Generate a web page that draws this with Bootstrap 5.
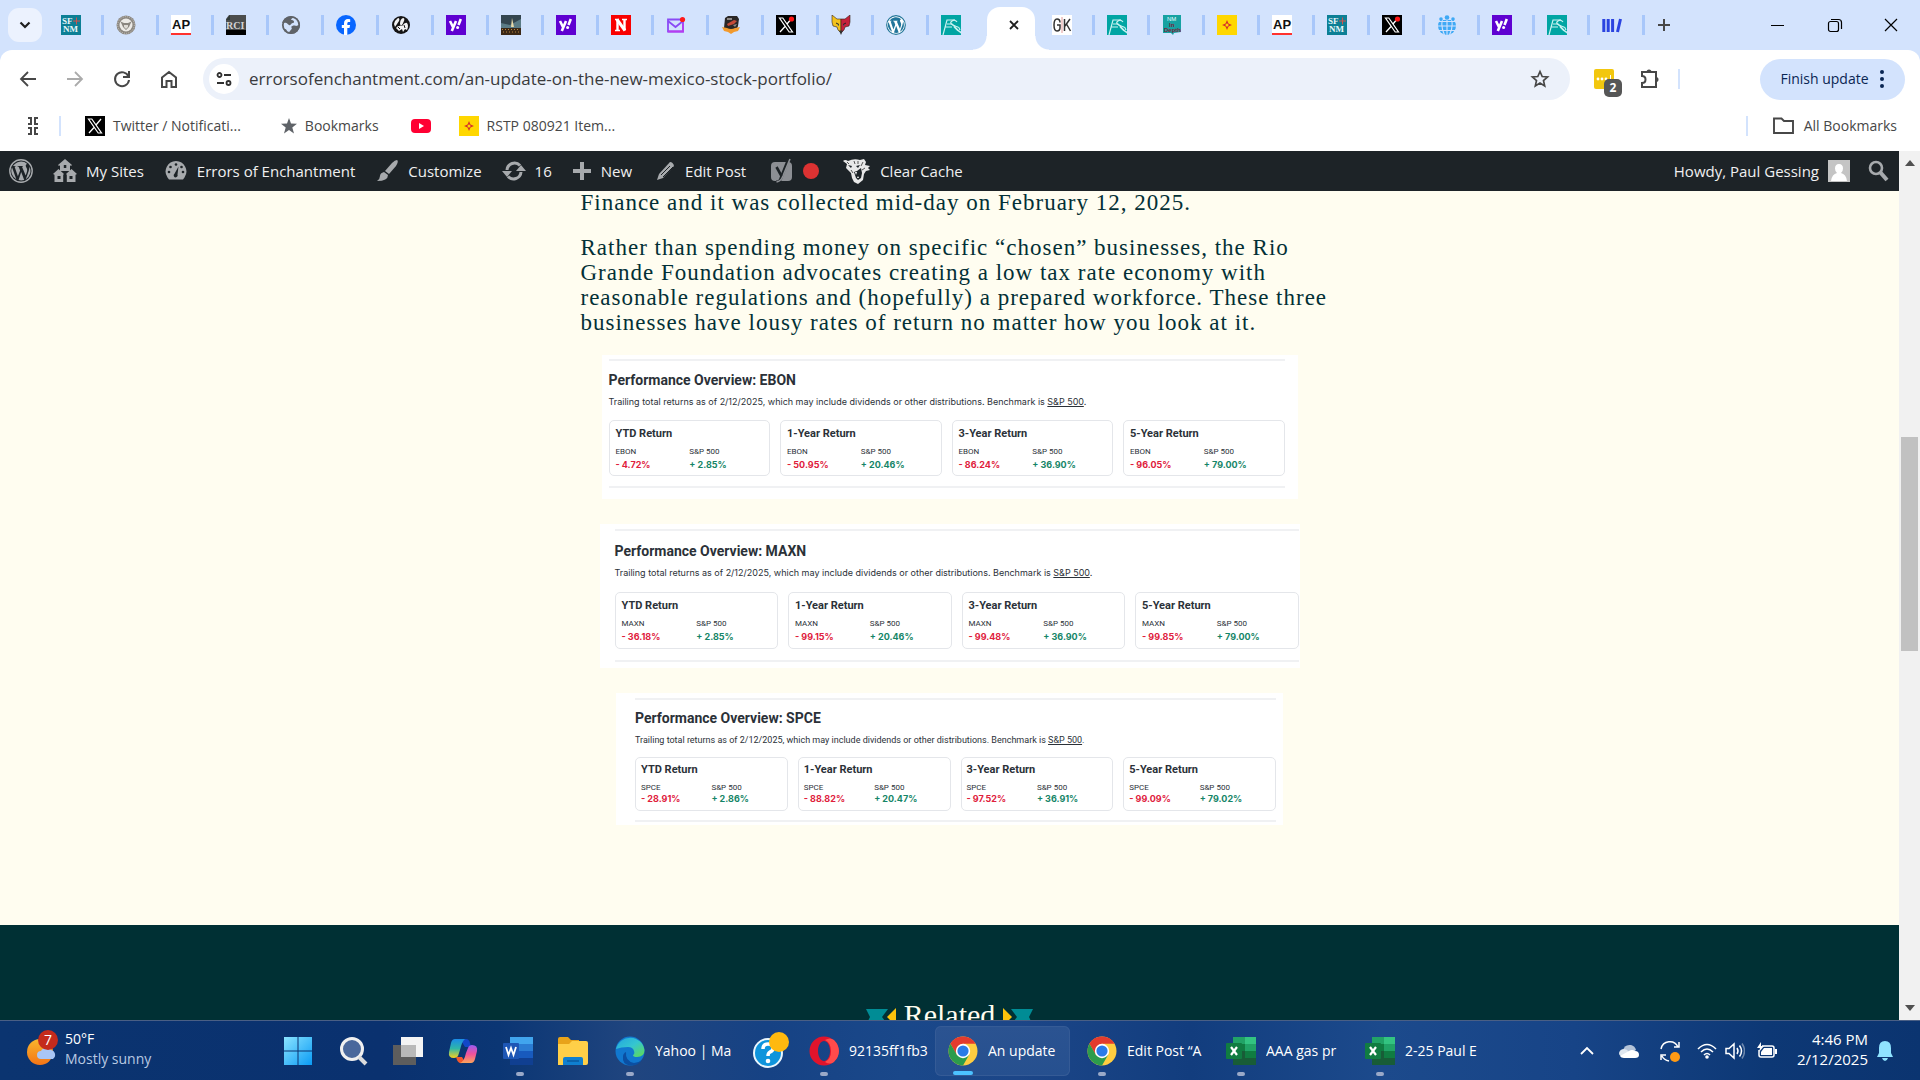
<!DOCTYPE html>
<html lang="en">
<head>
<meta charset="utf-8">
<meta name="viewport" content="width=device-width, initial-scale=1">
<title>An update on the New Mexico stock portfolio</title>
<link rel="stylesheet" href="https://cdn.jsdelivr.net/npm/bootstrap@5.3.0/dist/css/bootstrap.min.css">
<style>
  body { font-family: "Open Sans", "Noto Sans", sans-serif; font-size: 14px; line-height: 20px; color: #1f1f1f; background: #fffdf0; }
  a { text-decoration: none; color: inherit; }
  button, input { font: inherit; color: inherit; }
  .plainbtn { background: none; border: 0; padding: 0; display: inline-flex; align-items: center; justify-content: center; flex: none; }
  svg { display: block; flex: none; }
  .i16 { width: 16px; height: 16px; } .i20 { width: 20px; height: 20px; } .i24 { width: 24px; height: 24px; } .i30 { width: 30px; height: 30px; }

  /* browser chrome */
  .tabstrip { background: #d3e3fd; height: 50px; }
  .tabmenu { width: 34px; height: 34px; border-radius: 11px; background: #ecf2fe; margin: 0 7px 0 8px; }
  .tabcell { width: 55px; height: 20px; padding-left: 12px; border-right: 3px solid #a8c7fa; flex: 0 1 55px; }
  .tabcell.noline { border-color: transparent; }
  .tablive { width: 48px; height: 43px; margin: 7px 5px 0 3px; padding: 0 0 7px 5px; background: #fff; border-radius: 13px 13px 0 0; position: relative; }
  .tablive::before, .tablive::after { content: ""; position: absolute; bottom: 0; width: 14px; height: 14px; }
  .tablive::before { left: -14px; background: radial-gradient(circle at 0 0, transparent 13px, #fff 14px); }
  .tablive::after { right: -14px; background: radial-gradient(circle at 100% 0, transparent 13px, #fff 14px); }
  .winbtn { width: 57px; height: 50px; }
  .toolwrap { background: #d3e3fd; }
  .toolrow { background: #fff; height: 58px; border-radius: 12px 12px 0 0; color: #474747; padding: 0 15px 0 4px; }
  .navbtn { width: 47px; height: 40px; }
  .omnibox { height: 42px; border-radius: 21px; background: #ecf1fa; margin-left: 11px; padding: 0 20px 0 6px; }
  .sitechip { width: 30px; height: 30px; border-radius: 50%; background: #fff; }
  .omnibox input { border: 0; background: transparent; outline: 0; font-size: 17px; line-height: 24px; padding: 0 0 0 10px; color: #3a3b3d; }
  .extbadge { position: absolute; left: 10px; top: 10px; width: 18px; height: 18px; border-radius: 5px; background: #565656; color: #fff; font-size: 12px; line-height: 18px; font-weight: 700; text-align: center; }
  .vline { width: 2px; height: 20px; background: #d3e3fd; }
  .updatebtn { width: 145px; height: 41px; border-radius: 21px; background: #d3e3fd; color: #0a2653; gap: 10px; margin-left: 80px; }
  .bmrow { height: 43px; background: #fff; color: #474747; padding: 0 23px 7px 23px; }
  .bmrow a { display: inline-flex; align-items: center; gap: 8px; }

  /* admin bar */
  .adminbar { background: #1d2327; color: #f0f0f1; height: 40px; padding: 0 9px; font-size: 15px; }
  .adminbar a { display: inline-flex; align-items: center; gap: 9px; color: #f0f0f1; }
  .adminbar svg { color: #a7aaad; }
  .reddot { width: 16px; height: 16px; border-radius: 50%; background: #dc3232; }

  /* article */
  .article { margin-top: -1px; padding-bottom: 75px; }
  .adminbar { position: relative; z-index: 1; }
  .articletext { max-width: 738px; width: 100%; font-family: "Liberation Serif", serif; font-size: 23px; line-height: 25px; letter-spacing: 1px; color: #033036; }
  .articletext p { margin-bottom: 20px; white-space: nowrap; }
  .perf { background: #fff; width: 100%; margin-bottom: 25px; font-family: Roboto, sans-serif; color: #2b3138; }
  .perf-ebon { max-width: 696px; padding: 4px 13px 11px 7px; }
  .perf-maxn { max-width: 700px; padding: 5px 1px 6px 15px; }
  .perf-spce { max-width: 667px; padding: 5px 7px 3px 19px; }
  .perfin { border-top: 2px solid #f0f1f3; border-bottom: 2px solid #f0f1f3; padding: 10px 0; }
  .perf h2 { font-size: 14px; line-height: 18px; font-weight: 700; margin: 0 0 7px; }
  .perf p { font-family: Inter, sans-serif; font-size: 9px; line-height: 12px; margin: 0 0 12px; }
  .perf p a { text-decoration: underline; }
  .perfgrid { display: grid; grid-template-columns: repeat(4, 1fr); gap: 10px; }
  .retbox { border: 1px solid #e4e6ea; border-radius: 5px; padding: 6px 6px 4px; }
  .retbox h3 { font-size: 11px; line-height: 14px; font-weight: 700; margin: 0 0 5px; }
  .retbox dl { display: grid; grid-template-columns: 1fr 1fr; margin: 0; font-size: 8px; line-height: 12px; }
  .retbox dt { font-weight: 400; }
  .retbox dd { margin: 0; font-family: Inter, sans-serif; font-weight: 700; font-size: 9px; line-height: 13px; }
  .neg { color: #e0203c; } .pos { color: #158567; }
  .perf-maxn .perfin { padding: 11px 0; }
  .perf-maxn p { margin-bottom: 13px; }
  .perf-maxn .retbox { padding-bottom: 5px; }
  .perf-spce .perfin { padding: 9px 0; }
  .perf-spce p { font-family: Roboto, sans-serif; margin-bottom: 11px; }
  .perf-spce .retbox { padding: 5px; }
  .perf-spce .retbox dl { line-height: 11px; }
  .perf-spce .retbox dd { line-height: 12px; }
  .related { background: #003034; padding-top: 73px; color: #fffdf0; }
  .related h2 { font-family: "Liberation Serif", serif; font-size: 30px; line-height: 34px; margin: 0; }

  /* scroll bar */
  .sbar { width: 21px; background: #f1f1f1; padding: 8px 2px; }
  .sthumb { flex: 26 0 0; background: #c1c1c1; width: 17px; }

  /* taskbar */
  .taskbar { height: 60px; border-top: 1px solid #4a5f85; color: #fff; font-size: 14px;
    background: linear-gradient(90deg, #0b3470 0%, #0a316f 20%, #0b3674 26%, #20457f 33%, #164284 40%, #1a488a 47%, #1c4688 53%, #123d7e 62%, #1c4a8c 72%, #174487 82%, #0d3875 92%, #0b3470 100%); }
  .weather { width: 270px; padding-left: 26px; gap: 7px; }
  .weather .sub { color: #b9c9e2; }
  .twolines { padding-bottom: 4px; }
  .tbtn { width: 55px; height: 50px; color: #fff; position: relative; border-radius: 6px; }
  .twide { width: 139px; justify-content: flex-start; padding-left: 15px; gap: 10px; }
  .twide span { width: 80px; overflow: hidden; white-space: nowrap; text-align: left; }
  .tbtn.run::after { content: ""; position: absolute; left: 26px; bottom: 0; width: 8px; height: 4px; border-radius: 2px; background: #9aa9c8; }
  .tbtn.live { background: linear-gradient(#2b5391, #26508f); box-shadow: inset 0 0 0 1px #355b96; width: 135px; margin: 0 2px; padding-left: 13px; }
  .tbtn.live::after { left: 18px; bottom: 1px; width: 20px; background: #4cc2ff; }
  .tray { padding-right: 26px; }
  .tray .plainbtn { color: #fff; height: 40px; }
  .clock { font-size: 15px; }
</style>
<script src="https://cdn.jsdelivr.net/npm/bootstrap@5.3.0/dist/js/bootstrap.bundle.min.js"></script>
</head>
<body class="d-flex flex-column vh-100 overflow-hidden">

<svg width="0" height="0" class="position-absolute" aria-hidden="true">
  <defs>
    <symbol id="sfnm" viewBox="0 0 20 20"><path fill="#0c7f95" d="M0 0h20v20H0z"/><g fill="#e9f6f8" font-family="Liberation Serif" font-weight="700" font-size="9"><text x="1" y="9">SF</text><text x="2" y="17">NM</text></g><path stroke="#d0534d" d="M12 6h7M15.500 2.500v7"/></symbol>
    <symbol id="ap" viewBox="0 0 20 20"><path fill="#fff" d="M0 0h20v20H0z"/><path fill="#ff322e" d="M0 18h20v2H0z"/><text x="1" y="14" font-family="Liberation Sans" font-weight="700" font-size="13" fill="#111">AP</text></symbol>
    <symbol id="yahoo" viewBox="0 0 20 20"><path fill="#5f01d1" d="M0 0h20v20H0z"/><path d="M4 6l3.200 6.500M10 6l-4.200 10" stroke="#fff" stroke-width="2.600" fill="none"/><path d="M14.800 4l-2.300 6" stroke="#fff" stroke-width="2.600"/><circle cx="11.600" cy="12.600" r="1.500" fill="#fff"/></symbol>
    <symbol id="xlogo" viewBox="0 0 20 20"><path d="M0 0h20v20H0z"/><path d="M3.500 3h3.300l9.700 14h-3.300z" fill="none" stroke="#fff" stroke-width="1.200"/><path d="M16 3l-5 6M9 11.500L4 17" stroke="#fff" stroke-width="1.300"/></symbol>
    <symbol id="xdot" viewBox="0 0 20 20"><use href="#xlogo" width="20" height="20"/><circle cx="15.500" cy="4" r="2.600" fill="#ff1515"/></symbol>
    <symbol id="rgf" viewBox="0 0 20 20"><path fill="#00a5a3" d="M0 0h20v20H0z"/><g fill="none" stroke="#c9f3f1" stroke-width="1.200"><path d="M2 20L6 5h8M4 12h7M6 9h5l9 9"/><path d="M16 7q-2-3-5-1t1 4 5 2 2 3M13 12q3 4 7 5"/></g></symbol>
    <symbol id="zia" viewBox="0 0 20 20"><path fill="#ffd700" d="M0 0h20v20H0z"/><path fill="#d5302b" d="M10 5l1.500 3.500L15 10l-3.500 1.500L10 15l-1.500-3.500L5 10l3.500-1.500z"/><circle cx="10" cy="10" r="1.500" fill="#ffd700"/></symbol>
    <symbol id="chrome" viewBox="0 0 30 30"><circle cx="15" cy="15" r="14.500" fill="#ffcd40"/><path fill="#e33b2e" d="M2.400 7.800A14.500 14.500 0 0 1 27.600 7.800H15L8.500 18.500z"/><path fill="#2c9c4c" d="M2.400 7.800A14.500 14.500 0 0 0 15 29.500l6.300-10.900-6.300 3.600-6.300-3.600z"/><circle cx="15" cy="15" r="7.200" fill="#fff"/><circle cx="15" cy="15" r="5.600" fill="#2a7be8"/></symbol>
    <symbol id="excel" viewBox="0 0 30 30"><path fill="#21a366" d="M7 1h12v7H7z"/><path fill="#33c481" d="M19 1h11v7H19z"/><path fill="#107c41" d="M7 8h23v7H7z"/><path fill="#21a366" d="M19 8h11v7H19z"/><path fill="#185c37" d="M7 15h23v14H7z"/><path fill="#107c41" d="M19 15h11v7H19z"/><rect y="7" width="16" height="16" rx="1" fill="#107c41"/><path d="M5 11l6 8M11 11l-6 8" stroke="#fff" stroke-width="2.200"/></symbol>
    <symbol id="wp" viewBox="0 0 24 24"><circle cx="12" cy="12" r="11.200" fill="none" stroke="currentColor" stroke-width="1.400"/><path fill="currentColor" d="M3 8.300L7.300 20.200A9.400 9.400 0 0 1 3 8.300zM4 7A9.500 9.500 0 0 1 18.300 5c-2 .3-1.900 2.200-.7 3.900 1.100 2 .5 3.600-.9 7.700L13 7.800l1-.2V7H8.500v.6l1.200.2 1.400 3.800-2.200 5.700L5.600 7.800l1-.2V7zM12.200 13l3 8a9.500 9.500 0 0 1-5.600.1zM20.300 7.500a9.500 9.500 0 0 1-3.500 12.700l2.900-8.300c.6-1.700.8-3 .6-4.400z"/></symbol>
  </defs>
</svg>

<header>
  <nav class="tabstrip d-flex align-items-center" aria-label="Tabs">
    <button class="plainbtn tabmenu" aria-label="Search tabs"><svg class="i16" viewBox="0 0 16 16"><path d="M3.500 5.500L8 10l4.500-4.500" fill="none" stroke="#1f1f1f" stroke-width="2.200"/></svg></button>
    <a href="#" class="tabcell" aria-label="Santa Fe New Mexican"><svg class="i20"><use href="#sfnm"/></svg></a>
    <a href="#" class="tabcell" aria-label="Seal"><svg class="i20" viewBox="0 0 20 20"><circle cx="10" cy="10" r="9.500" fill="#8b8780"/><circle cx="10" cy="10" r="8.300" fill="none" stroke="#c9c6c0" stroke-dasharray="1 1"/><circle cx="10" cy="10" r="6.500" fill="#eceae6"/><path d="M4.500 6.500L8 8h4l3.500-1.500L13 12l-3 3-3-3z" fill="#8a867f"/><path d="M8 10h4v2l-2 2-2-2z" fill="#dedbd5"/></svg></a>
    <a href="#" class="tabcell" aria-label="AP News"><svg class="i20"><use href="#ap"/></svg></a>
    <a href="#" class="tabcell" aria-label="RealClearInvestigations"><svg class="i20" viewBox="0 0 20 20"><path fill="#4b4d4d" d="M3 0h17v15H0V4z"/><path d="M0 15h20v5H0z"/><path fill="#2f3938" d="M0 5l4-5v5z"/><text x="0" y="14" font-family="Liberation Serif" font-size="10" font-weight="700" fill="#d4d4d4">RCI</text></svg></a>
    <a href="#" class="tabcell" aria-label="Web page"><svg class="i20" viewBox="0 0 20 20"><circle cx="10" cy="10" r="9" fill="#5f6368"/><path fill="#d3e3fd" d="M3 8c3-1 3 1 5 2s2-2 4-2 1-3-1-3 0-2 2-3l4 3 1 5-3 1c-2-1-4 0-5 1 2 1 0 3-1 4s-1 3-3 1c0-2-1-3-2-3s-4-1-4-6z"/><circle cx="10" cy="10" r="8.200" fill="none" stroke="#5f6368" stroke-width="1.800"/></svg></a>
    <a href="#" class="tabcell" aria-label="Facebook"><svg class="i20" viewBox="0 0 20 20"><circle cx="10" cy="10" r="10" fill="#0866ff"/><path fill="#fff" d="M8 20v-7H5.800v-3H8V8.500C8 5.500 9.400 4 12 4l2.200.2V7h-1.300C11.600 7 11.300 7.600 11.300 8.500V10h2.800l-.6 3h-2.200v7z"/></svg></a>
    <a href="#" class="tabcell" aria-label="Jackrabbit"><svg class="i20" viewBox="0 0 20 20"><circle cx="10" cy="10" r="9" fill="#151515"/><g fill="#f3f3f3"><path d="M3 9q1-4 4-6 2 0 1 3-2 3-4 6zM9 9q0-5 3-6 2 0 1 3-1 3-3 5z"/><path d="M5 13q2-3 6-2 3-4 5-3 2 3 0 7l-2-1-2 3-1-3-3 2z"/></g><path stroke="#151515" d="M7 12l2 2M13 10l1 3"/></svg></a>
    <a href="#" class="tabcell" aria-label="Yahoo"><svg class="i20"><use href="#yahoo"/></svg></a>
    <a href="#" class="tabcell" aria-label="Night view"><svg class="i20" viewBox="0 0 20 20"><path fill="#34464f" d="M0 0h20v20H0z"/><path fill="#5b7c86" d="M0 8l9 2 11-6v9H0z"/><path fill="#e8d9a8" d="M11 3l2 9h-3z"/><path fill="#3b2816" d="M0 13h20v7H0z"/><path stroke="#b98540" stroke-dasharray="1 2" d="M1 14.500h18M2 17h17"/></svg></a>
    <a href="#" class="tabcell" aria-label="Yahoo"><svg class="i20"><use href="#yahoo"/></svg></a>
    <a href="#" class="tabcell" aria-label="Newsweek"><svg class="i20" viewBox="0 0 20 20"><path fill="#f90100" d="M0 0h20v20H0z"/><path d="M6.500 4.500v11M13.500 4.500v11" stroke="#fff" stroke-width="2.400"/><path d="M6 4.500l8 11" stroke="#fff" stroke-width="3"/><path d="M4 4.500h4M4 15.500h5M11 4.500h5" stroke="#fff" stroke-width="1.500"/></svg></a>
    <a href="#" class="tabcell" aria-label="Mail"><svg class="i20" viewBox="0 0 20 20"><g fill="none" stroke="#8a4bf5" stroke-width="1.800"><path d="M2 4.500h15v12H2z"/><path d="M2 6l7.500 6L17 6" /></g><path d="M2 16.500h15v-8" stroke="#b73cf0" fill="none" stroke-width="1.800"/><circle cx="16.500" cy="4.500" r="2.600" fill="#ff1a1a"/></svg></a>
    <a href="#" class="tabcell" aria-label="Team crest"><svg class="i20" viewBox="0 0 20 20"><path fill="#2a2726" d="M4 3l3-2 9 0 2 3-1 7-2 5H5l-2-3z"/><path fill="#c54a37" d="M6 9l7-4 3 1-3 3-6 2z"/><path fill="#8f8a87" d="M6 3h5v2H6zM12 10l4-1-2 3z"/><path fill="#f29a2d" d="M1 12l5 1q4 2 8 0l5-1-2 4-4 1-3 2-3-2-4-1z"/></svg></a>
    <a href="#" class="tabcell" aria-label="X"><svg class="i20"><use href="#xdot"/></svg></a>
    <a href="#" class="tabcell" aria-label="Wolf"><svg class="i20" viewBox="0 0 20 20"><path fill="#f3c21c" stroke="#352117" stroke-width=".6" d="M1 0l5 4h4v14l-3-3-1-3-4-1-1-4z"/><path fill="#c6223c" stroke="#352117" stroke-width=".6" d="M19 0l-5 4h-4v14l3-3 1-3 4-1 1-4z"/><path stroke="#222" d="M5 8l3 1.500M15 8l-3 1.500"/><path fill="#2c5f78" d="M6 9.500l2 .5v1zM14 9.500l-2 .5v1z"/><path fill="#333" d="M8 15.500h4L10 20z"/></svg></a>
    <a href="#" class="tabcell" aria-label="WordPress"><svg class="i20" viewBox="0 0 20 20" color="#21759b"><circle cx="10" cy="10" r="10" fill="#fff"/><use href="#wp" width="20" height="20"/></svg></a>
    <a href="#" class="tabcell noline" aria-label="Rio Grande Foundation"><svg class="i20"><use href="#rgf"/></svg></a>
    <div class="tablive d-flex align-items-center justify-content-center"><button class="plainbtn" aria-label="Close tab"><svg class="i16" viewBox="0 0 16 16"><path d="M4 4l8 8M12 4l-8 8" stroke="#1f1f1f" stroke-width="1.800"/></svg></button></div>
    <a href="#" class="tabcell" aria-label="GK"><svg class="i20" viewBox="0 0 20 20"><path fill="#fff" d="M0 0h20v20H0z"/><path d="M10 2v16" stroke="#e29a9a"/><g fill="none" stroke="#333" stroke-width="1.500"><path d="M8 7.500q0-3.500-3-3.500-3 0-3 6t3 6q3 0 3-3.500V10H5M12.500 4v12M18 4l-5 7M14.500 9l4 7"/></g></svg></a>
    <a href="#" class="tabcell" aria-label="Rio Grande Foundation"><svg class="i20"><use href="#rgf"/></svg></a>
    <a href="#" class="tabcell" aria-label="New Mexico In Depth"><svg class="i20" viewBox="0 0 20 20"><path fill="#16a2a2" d="M1 0h18v17l-7 1-1 2-2-2H1z"/><text x="5" y="6" font-size="6" font-family="Liberation Sans" fill="#e6ffff">NM</text><g font-size="6" font-weight="700" font-family="Liberation Sans" fill="#7c1f3a"><text x="7" y="12">In</text><text x="2" y="17">Depth</text></g></svg></a>
    <a href="#" class="tabcell" aria-label="Piñon"><svg class="i20"><use href="#zia"/></svg></a>
    <a href="#" class="tabcell" aria-label="AP News"><svg class="i20"><use href="#ap"/></svg></a>
    <a href="#" class="tabcell" aria-label="Santa Fe New Mexican"><svg class="i20"><use href="#sfnm"/></svg></a>
    <a href="#" class="tabcell" aria-label="X"><svg class="i20"><use href="#xdot"/></svg></a>
    <a href="#" class="tabcell" aria-label="People globe"><svg class="i20" viewBox="0 0 20 20"><circle cx="10" cy="11" r="9" fill="#3fa9f5"/><path d="M0 6.500h20M0 11h20M0 15.500h20M5.500 4q-2 8 2 16M14.500 4q2 8-2 16M10 5v15" stroke="#d3e3fd" fill="none" stroke-width="1.100"/><path fill="#d3e3fd" d="M0 0h20v5H0z"/><g fill="#3fa9f5"><circle cx="10" cy="2.500" r="2.300"/><circle cx="4" cy="4" r="1.800"/><circle cx="16" cy="4" r="1.800"/></g></svg></a>
    <a href="#" class="tabcell" aria-label="Yahoo"><svg class="i20"><use href="#yahoo"/></svg></a>
    <a href="#" class="tabcell" aria-label="Rio Grande Foundation"><svg class="i20"><use href="#rgf"/></svg></a>
    <a href="#" class="tabcell" aria-label="Library"><svg class="i20" viewBox="0 0 20 20"><path d="M1.800 4v13M6.200 4v13M10.600 4v13M18.500 4l-3 13" stroke="#2b44e0" stroke-width="3"/></svg></a>
    <button class="plainbtn ms-2" aria-label="New tab"><svg class="i20" viewBox="0 0 20 20"><path d="M11 4v12M5 10h12" stroke="#474747" stroke-width="2"/></svg></button>
    <div class="ms-auto d-flex">
      <button class="plainbtn winbtn" aria-label="Minimize"><svg class="i16" viewBox="0 0 16 16"><path d="M1 8.500h13" stroke="#000"/></svg></button>
      <button class="plainbtn winbtn" aria-label="Restore"><svg class="i16" viewBox="0 0 16 16"><g fill="none" stroke="#000" stroke-width="1.200"><rect x="1.500" y="4.500" width="10" height="10" rx="2"/><path d="M4 2.500h7.500q3 0 3 3V12"/></g></svg></button>
      <button class="plainbtn winbtn" aria-label="Close"><svg class="i16" viewBox="0 0 16 16"><path d="M1 2l12 12M13 2L1 14" stroke="#000" stroke-width="1.200"/></svg></button>
    </div>
  </nav>

  <div class="toolwrap">
    <div class="toolrow d-flex align-items-center">
      <button class="plainbtn navbtn" aria-label="Back"><svg class="i20" viewBox="0 0 20 20"><path d="M18 10H3.500M10 3l-7 7 7 7" fill="none" stroke="#474747" stroke-width="1.800"/></svg></button>
      <button class="plainbtn navbtn" aria-label="Forward"><svg class="i20" viewBox="0 0 20 20"><path d="M2 10h14.500M10 3l7 7-7 7" fill="none" stroke="#ababab" stroke-width="1.800"/></svg></button>
      <button class="plainbtn navbtn" aria-label="Reload"><svg class="i20" viewBox="0 0 20 20"><path d="M16.500 7.500A7 7 0 1 0 17 11M17 2v6h-6" fill="none" stroke="#474747" stroke-width="2"/></svg></button>
      <button class="plainbtn navbtn" aria-label="Home"><svg class="i20" viewBox="0 0 20 20"><path d="M3 8.500L10 3l7 5.500V18h-4.500v-6h-5v6H3z" fill="none" stroke="#474747" stroke-width="2"/></svg></button>
      <div class="omnibox d-flex align-items-center flex-grow-1">
        <button class="plainbtn sitechip" aria-label="Site information"><svg class="i16" viewBox="0 0 16 16"><g fill="none" stroke="#303030" stroke-width="1.800"><circle cx="3.500" cy="4" r="2"/><path d="M8 4h7M1 12h7"/><circle cx="12.500" cy="12" r="2"/></g></svg></button>
        <input class="flex-grow-1" type="text" aria-label="Address" value="errorsofenchantment.com/an-update-on-the-new-mexico-stock-portfolio/">
        <button class="plainbtn" aria-label="Bookmark this page"><svg class="i20" viewBox="0 0 20 20"><path d="M10 2.500l2.200 5 5.400.5-4.100 3.600 1.200 5.300L10 14.100l-4.700 2.800 1.200-5.300L2.400 8l5.400-.5z" fill="none" stroke="#474747" stroke-width="1.700"/></svg></button>
      </div>
      <button class="plainbtn position-relative ms-4" aria-label="Password extension"><svg class="i20" viewBox="0 0 20 20"><rect width="20" height="20" rx="2" fill="#f2c70f"/><g fill="#fff"><circle cx="4" cy="10" r="1.400"/><circle cx="8" cy="10" r="1.400"/><circle cx="12" cy="10" r="1.400"/><path d="M16 6h1v6h-1z"/></g></svg><span class="extbadge">2</span></button>
      <button class="plainbtn ms-4" aria-label="Extensions"><svg class="i24" viewBox="0 0 24 24"><path fill="none" stroke="#474747" stroke-width="2" d="M4 5h14v15H4v-4q3.500 0 3.500-3.500T4 9z"/><path fill="#474747" d="M8.500 5a2.500 2.500 0 0 1 5 0zM18 10a2.500 2.500 0 0 1 0 5z"/></svg></button>
      <span class="vline ms-3"></span>
      <button class="plainbtn updatebtn">Finish update<svg width="6" height="20" viewBox="0 0 6 20" fill="#0a2653"><circle cx="3" cy="3" r="2"/><circle cx="3" cy="10" r="2"/><circle cx="3" cy="17" r="2"/></svg></button>
    </div>
  </div>

  <nav class="bmrow d-flex align-items-center" aria-label="Bookmarks">
    <button class="plainbtn" aria-label="Tab groups"><svg class="i20" viewBox="0 0 20 20"><path d="M5 2h3v6H5M15 2h-3v6h3M5 12h3v6H5M15 12h-3v6h3" fill="none" stroke="#474747" stroke-width="2"/></svg></button>
    <span class="vline ms-3 me-4"></span>
    <a href="#"><svg class="i20"><use href="#xlogo"/></svg>Twitter / Notificati...</a>
    <a href="#" class="ms-4 ps-3"><svg class="i16" viewBox="0 0 16 16"><path fill="#5f6368" d="M8 0l2 5.600 6 .2-4.700 3.700L13 15.500l-5-3.500-5 3.500 1.700-6L0 5.800l6-.2z"/></svg>Bookmarks</a>
    <a href="#" class="mx-4 ps-2 pe-1" aria-label="YouTube"><svg class="i20" viewBox="0 0 20 20"><rect y="3" width="20" height="14" rx="4" fill="#ff0033"/><path fill="#fff" d="M8 7l5 3-5 3z"/></svg></a>
    <a href="#"><svg class="i20"><use href="#zia"/></svg>RSTP 080921 Item...</a>
    <span class="vline ms-auto me-4"></span>
    <a href="#"><svg class="i24" viewBox="0 0 24 24"><path fill="none" stroke="#474747" stroke-width="1.900" d="M2 5.500V19h19V7H12L9.500 4.500H2z"/></svg>All Bookmarks</a>
  </nav>
</header>

<div class="d-flex flex-grow-1 overflow-hidden">
  <div class="flex-grow-1 d-flex flex-column overflow-hidden">
    <nav class="adminbar d-flex align-items-center flex-shrink-0" aria-label="Toolbar">
      <a href="#" aria-label="About WordPress"><svg class="i24"><use href="#wp"/></svg></a>
      <a href="#" class="ms-3 ps-1"><svg class="i24" viewBox="0 0 24 24" fill="currentColor"><path d="M12 0l7 6-1 1-1-.7V12H7V6.300L6 7 5 6zM5.500 10L11 15l-.8.800V23H1.500v-7.200L0 15zM18.500 10L24 15l-1.500.8V23h-8.700v-7.200L13 15z"/><path fill="#1d2327" d="M10.800 6h2.500v3h-2.500zM4.500 17h3v3h-3zM16.500 17h3v3h-3z"/></svg>My Sites</a>
      <a href="#" class="ms-3 ps-1"><svg class="i24" viewBox="0 0 24 24"><path fill="currentColor" d="M12 2a10.500 10.500 0 0 1 8.500 16.500l-1.500 2H5l-1.500-2A10.500 10.500 0 0 1 12 2z"/><g fill="#1d2327"><circle cx="12" cy="5.500" r="1.300"/><circle cx="6.500" cy="8" r="1.300"/><circle cx="17.500" cy="8" r="1.300"/><circle cx="5" cy="13" r="1.300"/><circle cx="19" cy="13" r="1.300"/><path d="M14.500 7.500l-1 8a2 2 0 1 1-3-.8z"/></g></svg>Errors of Enchantment</a>
      <a href="#" class="ms-3 ps-1"><svg class="i24" viewBox="0 0 24 24" fill="currentColor"><path d="M22 1q2 1-1 6l-7 8-4-3 7-8q3-3 5-3zM9 13l4 3q0 6-11 6 3-2 3-5t4-4z"/></svg>Customize</a>
      <a href="#" class="ms-3 ps-1"><svg class="i24" viewBox="0 0 24 24"><g fill="none" stroke="currentColor" stroke-width="3"><path d="M5 11a7.500 7.500 0 0 1 13-4.500M19 13a7.500 7.500 0 0 1-13 4.500"/></g><path fill="currentColor" d="M14 12h10l-5-6zM0 12h10l-5 6z"/></svg>16</a>
      <a href="#" class="ms-3 ps-1"><svg class="i20" viewBox="0 0 20 20"><path d="M10 1v18M1 10h18" stroke="currentColor" stroke-width="4"/></svg>New</a>
      <a href="#" class="ms-3 ps-2"><svg class="i20" viewBox="0 0 20 20"><path fill="currentColor" d="M14 1q3 0 4 4L7 17l-6 2 2-6z"/><path stroke="#1d2327" d="M5 14l9-9M7 16L17 6" /></svg>Edit Post</a>
      <a href="#" class="ms-3 ps-2" aria-label="SEO"><svg width="24" height="26" viewBox="0 0 24 26"><rect x="1" y="4" width="21" height="19" rx="4" fill="#8c8f94"/><path d="M19 0l-8 20q-1 4-5 4" fill="none" stroke="#1d2327" stroke-width="3"/><path d="M20 1l-7.500 18q-1.500 4-6 5" fill="none" stroke="#8c8f94" stroke-width="1.600"/><path d="M6.500 9l5 9" stroke="#1d2327" stroke-width="2.600"/></svg><span class="reddot"></span></a>
      <a href="#" class="ms-4"><svg width="28" height="26" viewBox="0 0 28 26"><path fill="#e8e8e8" d="M0 3q2-2 5 0 6-3 12-1l4-1 2 3-1 3 5 1-2 2 2 2-4 1-2 3-1 6-5 4-4-2-2-4-1-5-5-5 1-4z"/><path fill="#1d2327" d="M5 7l4 1-1 2zM13 8l4-1-2 3zM11 14l3-1 4-3 1 5-1 5-3 2-2-2z"/><path fill="#fff" d="M12 14l1 3 1-3zM14 20l1-2 1 2z"/><path stroke="#555" d="M11 3l1 3M15 3v3M20 4l-2 4M8 12l2 3M22 10l-3 2M4 4l2 2" /></svg>Clear Cache</a>
      <a href="#" class="ms-auto">Howdy, Paul Gessing<svg width="22" height="22" viewBox="0 0 22 22"><path fill="#c4c4c4" d="M0 0h22v22H0z"/><path fill="#fff" d="M11 4q4 0 4 4.500 0 3-2 4.500 5 1 6 8H3q1-7 6-8-2-1.500-2-4.500Q7 4 11 4z"/></svg></a>
      <button class="plainbtn ms-3" aria-label="Search"><svg class="i24" viewBox="0 0 24 24"><circle cx="10" cy="9" r="6" fill="none" stroke="currentColor" stroke-width="2.600"/><path d="M14 13l7 8" stroke="currentColor" stroke-width="4"/></svg></button>
    </nav>

    <main class="article d-flex flex-column align-items-center flex-shrink-0">
      <div class="articletext">
        <p>Finance and it was collected mid-day on February 12, 2025.</p>
        <p>Rather than spending money on specific “chosen” businesses, the Rio<br>Grande Foundation advocates creating a low tax rate economy with<br>reasonable regulations and (hopefully) a prepared workforce. These three<br>businesses have lousy rates of return no matter how you look at it.</p>
      </div>

      <section class="perf perf-ebon"><div class="perfin">
        <h2>Performance Overview: EBON</h2>
        <p>Trailing total returns as of 2/12/2025, which may include dividends or other distributions. Benchmark is <a href="#">S&amp;P 500</a>.</p>
        <div class="perfgrid">
          <div class="retbox"><h3>YTD Return</h3><dl><dt>EBON</dt><dt>S&amp;P 500</dt><dd class="neg">- 4.72%</dd><dd class="pos">+ 2.85%</dd></dl></div>
          <div class="retbox"><h3>1-Year Return</h3><dl><dt>EBON</dt><dt>S&amp;P 500</dt><dd class="neg">- 50.95%</dd><dd class="pos">+ 20.46%</dd></dl></div>
          <div class="retbox"><h3>3-Year Return</h3><dl><dt>EBON</dt><dt>S&amp;P 500</dt><dd class="neg">- 86.24%</dd><dd class="pos">+ 36.90%</dd></dl></div>
          <div class="retbox"><h3>5-Year Return</h3><dl><dt>EBON</dt><dt>S&amp;P 500</dt><dd class="neg">- 96.05%</dd><dd class="pos">+ 79.00%</dd></dl></div>
        </div>
      </div></section>

      <section class="perf perf-maxn"><div class="perfin">
        <h2>Performance Overview: MAXN</h2>
        <p>Trailing total returns as of 2/12/2025, which may include dividends or other distributions. Benchmark is <a href="#">S&amp;P 500</a>.</p>
        <div class="perfgrid">
          <div class="retbox"><h3>YTD Return</h3><dl><dt>MAXN</dt><dt>S&amp;P 500</dt><dd class="neg">- 36.18%</dd><dd class="pos">+ 2.85%</dd></dl></div>
          <div class="retbox"><h3>1-Year Return</h3><dl><dt>MAXN</dt><dt>S&amp;P 500</dt><dd class="neg">- 99.15%</dd><dd class="pos">+ 20.46%</dd></dl></div>
          <div class="retbox"><h3>3-Year Return</h3><dl><dt>MAXN</dt><dt>S&amp;P 500</dt><dd class="neg">- 99.48%</dd><dd class="pos">+ 36.90%</dd></dl></div>
          <div class="retbox"><h3>5-Year Return</h3><dl><dt>MAXN</dt><dt>S&amp;P 500</dt><dd class="neg">- 99.85%</dd><dd class="pos">+ 79.00%</dd></dl></div>
        </div>
      </div></section>

      <section class="perf perf-spce"><div class="perfin">
        <h2>Performance Overview: SPCE</h2>
        <p>Trailing total returns as of 2/12/2025, which may include dividends or other distributions. Benchmark is <a href="#">S&amp;P 500</a>.</p>
        <div class="perfgrid">
          <div class="retbox"><h3>YTD Return</h3><dl><dt>SPCE</dt><dt>S&amp;P 500</dt><dd class="neg">- 28.91%</dd><dd class="pos">+ 2.86%</dd></dl></div>
          <div class="retbox"><h3>1-Year Return</h3><dl><dt>SPCE</dt><dt>S&amp;P 500</dt><dd class="neg">- 88.82%</dd><dd class="pos">+ 20.47%</dd></dl></div>
          <div class="retbox"><h3>3-Year Return</h3><dl><dt>SPCE</dt><dt>S&amp;P 500</dt><dd class="neg">- 97.52%</dd><dd class="pos">+ 36.91%</dd></dl></div>
          <div class="retbox"><h3>5-Year Return</h3><dl><dt>SPCE</dt><dt>S&amp;P 500</dt><dd class="neg">- 99.09%</dd><dd class="pos">+ 79.02%</dd></dl></div>
        </div>
      </div></section>
    </main>

    <section class="related flex-grow-1 flex-shrink-0 d-flex justify-content-center align-items-start gap-2">
      <svg width="30" height="34" viewBox="0 0 30 34"><path fill="#008c95" d="M0 11h22l-6 8 6 8H0l4-8z"/><path fill="#fcc30b" d="M30 10v18l-9-9z"/></svg>
      <h2>Related</h2>
      <svg width="30" height="34" viewBox="0 0 30 34"><path fill="#008c95" d="M30 11H8l6 8-6 8h22l-4-8z"/><path fill="#fcc30b" d="M0 10v18l9-9z"/></svg>
    </section>
  </div>

  <div class="sbar d-flex flex-column align-items-center flex-shrink-0" aria-hidden="true">
    <svg width="10" height="7" viewBox="0 0 10 7"><path fill="#505050" d="M0 7h10L5 1z"/></svg>
    <div style="flex:33 0 0"></div>
    <div class="sthumb"></div>
    <div style="flex:43 0 0"></div>
    <svg width="10" height="7" viewBox="0 0 10 7"><path fill="#505050" d="M0 0h10L5 6z"/></svg>
  </div>
</div>

<footer class="taskbar d-flex align-items-center flex-shrink-0">
  <div class="weather d-flex align-items-center flex-shrink-0">
    <svg width="32" height="42" viewBox="0 0 32 42"><defs><linearGradient id="sun" x1="0" y1="0" x2="0" y2="1"><stop offset="0" stop-color="#f8b62d"/><stop offset="1" stop-color="#f47416"/></linearGradient></defs><circle cx="14" cy="22" r="13" fill="url(#sun)"/><path fill="#a9c6f5" d="M15 29a4 4 0 0 1 0-8 6 6 0 0 1 10-1 5 5 0 0 1 2 9z"/><circle cx="22" cy="10" r="10" fill="#c42b1c"/><text x="18" y="15" font-size="14" fill="#fff" font-family="Open Sans">7</text></svg>
    <div class="twolines"><div>50°F</div><div class="sub">Mostly sunny</div></div>
  </div>
  <button class="plainbtn tbtn" aria-label="Start"><svg class="i30" viewBox="0 0 30 30"><defs><linearGradient id="win" x1="0" y1="0" x2="1" y2="1"><stop offset="0" stop-color="#8be4ff"/><stop offset="1" stop-color="#0a9bf5"/></linearGradient></defs><path fill="url(#win)" d="M1 1h13.500v13.500H1zM15.500 1H29v13.500H15.500zM1 15.500h13.500V29H1zM15.500 15.500H29V29H15.500z"/></svg></button>
  <button class="plainbtn tbtn" aria-label="Search"><svg class="i30" viewBox="0 0 30 30"><circle cx="14" cy="13" r="10.500" fill="#4a689c" stroke="#f0f0f0" stroke-width="3"/><path d="M21 21l7 7" stroke="#dcdcdc" stroke-width="4"/></svg></button>
  <button class="plainbtn tbtn" aria-label="Task view"><svg class="i30" viewBox="0 0 30 30"><path fill="#f4f4f4" d="M8 1h22v20H8z"/><path fill="#5d5d5d" d="M0 9h23v20H0z"/><path fill="#b9b9b9" d="M8 9h15v12H8z"/></svg></button>
  <button class="plainbtn tbtn" aria-label="Copilot"><svg class="i30" viewBox="0 0 30 30"><defs><linearGradient id="cpa" x1="0" y1="0" x2="0" y2="1"><stop offset="0" stop-color="#1a8be8"/><stop offset=".5" stop-color="#2fb7a8"/><stop offset="1" stop-color="#f6cf1f"/></linearGradient><linearGradient id="cpb" x1="0" y1="0" x2="0" y2="1"><stop offset="0" stop-color="#9a5cf0"/><stop offset=".5" stop-color="#f0519b"/><stop offset="1" stop-color="#fca45a"/></linearGradient></defs><path fill="#1247c8" d="M12 3h6q3 0 4 4l1 4h-6z"/><path fill="url(#cpa)" d="M7 3h10q-3 2-5 11l-2 6q-1 2-4 2-6 0-5-6l2-9q1-4 4-4z"/><path fill="#f2572c" d="M8 21h6l3 5q-6 3-8-2z"/><path fill="url(#cpb)" d="M23 27H12q4-1 6-10l2-5q1-3 4-3 6 0 5 6l-2 8q-1 4-4 4z"/></svg></button>
  <button class="plainbtn tbtn run" aria-label="Word"><svg class="i30" viewBox="0 0 30 30"><path fill="#41a5ee" d="M7 1h23v7H7z"/><path fill="#2b7cd3" d="M7 8h23v7H7z"/><path fill="#185abd" d="M7 15h23v7H7z"/><path fill="#103f91" d="M7 22h23v7H7z"/><rect y="7" width="16" height="16" rx="1" fill="#1d56b5"/><path d="M3 11l2.500 8L8 12l2.500 7L13 11" fill="none" stroke="#fff" stroke-width="1.800"/></svg></button>
  <button class="plainbtn tbtn" aria-label="File Explorer"><svg class="i30" viewBox="0 0 30 30"><path fill="#e8a31a" d="M0 3q0-2 2-2h8l3 3h8v8H0z"/><path fill="#ffcf48" d="M0 8h11l3-3h14q2 0 2 2v20q0 2-2 2H0z"/><path fill="#0f7fd0" d="M5 29v-6q0-2 2-2h16q2 0 2 2v6z"/><path stroke="#0a5aa0" stroke-width="1.500" d="M9 25h12"/></svg></button>
  <button class="plainbtn tbtn twide run"><svg class="i30" viewBox="0 0 30 30"><defs><linearGradient id="edg" x1="0" y1="0" x2="1" y2="1"><stop offset="0" stop-color="#22a5e0"/><stop offset=".5" stop-color="#35c6d0"/><stop offset="1" stop-color="#62dc4c"/></linearGradient></defs><circle cx="15" cy="15" r="14.500" fill="#1178cf"/><path fill="url(#edg)" d="M1 13A14.500 14.500 0 0 1 29.500 14q0 7-7.500 7-4 0-4-2 2-1 1-4-1-4-6-4-7 0-12 2z"/><path fill="#0b4fa2" d="M11 16q-1 9 8 11 4 0 8-3-4 6-12 5.500-8-1-7-9 0-3 3-4.500z"/></svg><span>Yahoo | Ma</span></button>
  <button class="plainbtn tbtn" aria-label="Get help"><svg width="38" height="38" viewBox="0 0 38 38" class="ms-2"><circle cx="16" cy="21" r="14" fill="#0e94dc" stroke="#eaf6fd" stroke-width="2"/><path d="M11 17q0-5 5-5t5 4q0 3-3 4-2 1-2 4" fill="none" stroke="#fff" stroke-width="3.500"/><circle cx="16" cy="29" r="2.300" fill="#fff"/><circle cx="27" cy="10" r="10" fill="#ffb90f"/></svg></button>
  <button class="plainbtn tbtn twide run"><svg class="i30" viewBox="0 0 30 30"><path fill="#e0142c" fill-rule="evenodd" d="M15 .5a14.500 14.500 0 1 1 0 29 14.500 14.500 0 0 1 0-29zM15 5c-3 0-6 4-6 10s3 10 6 10 6-4 6-10S18 5 15 5z"/><path fill="#ff4b4b" d="M16 4q5-3 9 0 5 5 5 11t-5 11q-4 3-9 0 6-3 6-11T16 4z"/></svg><span>92135ff1fb3</span></button>
  <button class="plainbtn tbtn twide run live"><svg class="i30"><use href="#chrome"/></svg><span>An update</span></button>
  <button class="plainbtn tbtn twide run"><svg class="i30"><use href="#chrome"/></svg><span>Edit Post “A</span></button>
  <button class="plainbtn tbtn twide run"><svg class="i30"><use href="#excel"/></svg><span>AAA gas pr</span></button>
  <button class="plainbtn tbtn twide run"><svg class="i30"><use href="#excel"/></svg><span>2-25 Paul E</span></button>

  <div class="tray ms-auto d-flex align-items-center">
    <button class="plainbtn px-2 mx-1" aria-label="Show hidden icons"><svg class="i16" viewBox="0 0 16 16"><path d="M2 11l6-6 6 6" fill="none" stroke="#fff" stroke-width="1.800"/></svg></button>
    <button class="plainbtn px-2 mx-1" aria-label="OneDrive"><svg class="i20" viewBox="0 0 20 20"><path fill="#b4c3d8" d="M4 10q1-7 8-6 4 1 5 5l-5 4z"/><path fill="#dfe7f0" d="M4 16q-4-1-4-4 1-4 5-4 3 0 5 3z"/><path fill="#fff" d="M5 17q-3 0-4-2l9-5q3-2 6 0 4 0 4 4 0 3-4 3z"/></svg></button>
    <button class="plainbtn px-2" aria-label="Windows Update"><svg width="22" height="24" viewBox="1 0 22 24"><g fill="none" stroke="#fff" stroke-width="1.500"><path d="M3 10a9 9 0 0 1 17-2M21 3v5h-5M3 21v-5h5M4 17q2 4 7 5"/></g><circle cx="17" cy="18" r="5" fill="#ff9a14"/></svg></button>
    <button class="plainbtn ps-2 me-3" aria-label="Network, volume and battery">
      <svg class="i20" viewBox="0 0 20 20"><g fill="none" stroke="#fff" stroke-width="1.600"><path d="M1 8q9-9 18 0M4 11q6-6 12 0M7 14q3-3 6 0"/></g><circle cx="10" cy="16" r="1.800" fill="#fff"/></svg>
      <svg class="i20 mx-2" viewBox="0 0 20 20"><g fill="none" stroke="#fff" stroke-width="1.500"><path d="M1 7.500h3L9 3v14l-5-4.500H1zM12 7q2 3 0 6M14.500 4.500q4 5.500 0 11"/><path opacity=".4" d="M17 2.500q5 7.500 0 15"/></g></svg>
      <svg class="i20 ms-1 me-1" viewBox="0 0 20 20"><path fill="none" stroke="#fff" stroke-width="1.500" d="M5 5h10q2 0 2 2v7q0 2-2 2H4q-2 0-2-2V9"/><path fill="#fff" d="M7 7h8v7H4v-3zM18 8h2v5h-2zM4 1L0 7h3L2 11l5-6H4z"/></svg>
    </button>
    <div class="clock twolines text-end me-2">4:46 PM<br>2/12/2025</div>
    <button class="plainbtn" aria-label="Notifications"><svg width="18" height="22" viewBox="0 0 18 22"><path fill="#8fe3ff" d="M9 1q6 0 6 7v5l2 4H1l2-4V8q0-7 6-7zM6 18h6q-1 3-3 3t-3-3z"/></svg></button>
  </div>
</footer>
</body>
</html>
